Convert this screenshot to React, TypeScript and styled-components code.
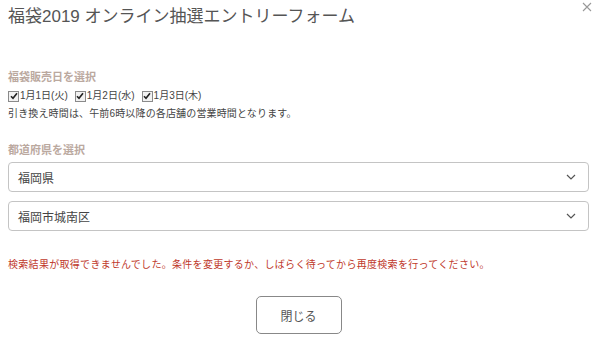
import React from 'react'
import styled, { createGlobalStyle } from 'styled-components'

const GlobalStyle = createGlobalStyle`
  body {
    margin: 0;
    background: #fff;
    font-family: "Liberation Sans", "Noto Sans CJK JP", sans-serif;
    color: #333;
  }
`

const Modal = styled.div`
  position: relative;
  width: 600px;
  height: 350px;
  box-sizing: border-box;
  padding: 5px 11px 0 8px;
  display: flex;
  flex-direction: column;
`

const Title = styled.h1`
  margin: 0;
  font-size: 17px;
  font-weight: normal;
  line-height: 24px;
  color: #555;
`

const CloseX = styled.button`
  position: absolute;
  top: 0;
  right: 6px;
  width: 14px;
  height: 14px;
  padding: 0;
  border: none;
  background: none;
  display: flex;
  align-items: center;
  justify-content: center;
`

const Section = styled.div`
  display: flex;
  flex-direction: column;
  margin-top: ${({ $top }: { $top: number }) => $top}px;
`

const Label = styled.div`
  font-size: 11px;
  line-height: 14px;
  font-weight: bold;
  color: #bba99f;
  margin-bottom: 5px;
`

const CheckRow = styled.div`
  display: flex;
  gap: 7px;
  font-size: 10px;
  line-height: 14px;
  color: #444;
`

const CheckItem = styled.label`
  display: flex;
  align-items: center;
  gap: 1px;
`

const Box = styled.span`
  width: 9px;
  height: 9px;
  border: 1px solid #8a8a8a;
  background: #f2f2f2;
  display: flex;
  align-items: center;
  justify-content: center;
`

const Note = styled.div`
  font-size: 10px;
  line-height: 14px;
  letter-spacing: 0.15px;
  color: #444;
  margin-top: 4px;
`

const Select = styled.div`
  height: 30px;
  box-sizing: border-box;
  border: 1px solid #c4c4c4;
  border-radius: 4px;
  padding: 0 12px 0 9px;
  display: flex;
  align-items: center;
  justify-content: space-between;
  font-size: 12px;
  color: #444;
  margin-bottom: ${({ $gap }: { $gap: number }) => $gap}px;
`

const ErrorText = styled.div`
  margin-top: 27px;
  font-size: 10px;
  line-height: 14px;
  letter-spacing: 0.3px;
  color: #c0392b;
`

const Footer = styled.div`
  display: flex;
  justify-content: center;
  margin-top: 24px;
`

const CloseButton = styled.button`
  width: 86px;
  height: 38px;
  border: 1px solid #888;
  border-radius: 5px;
  background: #fff;
  font-family: inherit;
  font-size: 12px;
  color: #555;
`

const Check = () => (
  <Box>
    <svg width="8" height="8" viewBox="0 0 8 8">
      <path d="M1 4.2 L3 6.3 L7 1.2" fill="none" stroke="#222" strokeWidth="1.6" />
    </svg>
  </Box>
)

const Chevron = () => (
  <svg width="10" height="6" viewBox="0 0 10 6">
    <path d="M1 1 L5 5 L9 1" fill="none" stroke="#555" strokeWidth="1.2" />
  </svg>
)

const days = ['1月1日(火)', '1月2日(水)', '1月3日(木)']

const App = () => (
  <Modal>
    <GlobalStyle />
    <CloseX aria-label="close">
      <svg width="10" height="10" viewBox="0 0 10 10">
        <path d="M1 1 L9 9 M9 1 L1 9" stroke="#999" strokeWidth="1.1" />
      </svg>
    </CloseX>
    <Title>福袋2019 オンライン抽選エントリーフォーム</Title>

    <Section $top={41}>
      <Label>福袋販売日を選択</Label>
      <CheckRow>
        {days.map((d) => (
          <CheckItem key={d}>
            <Check />
            {d}
          </CheckItem>
        ))}
      </CheckRow>
      <Note>引き換え時間は、午前6時以降の各店舗の営業時間となります。</Note>
    </Section>

    <Section $top={22}>
      <Label>都道府県を選択</Label>
      <Select $gap={9}>
        福岡県
        <Chevron />
      </Select>
      <Select $gap={0}>
        福岡市城南区
        <Chevron />
      </Select>
    </Section>

    <ErrorText>検索結果が取得できませんでした。条件を変更するか、しばらく待ってから再度検索を行ってください。</ErrorText>

    <Footer>
      <CloseButton>閉じる</CloseButton>
    </Footer>
  </Modal>
)

export default App
